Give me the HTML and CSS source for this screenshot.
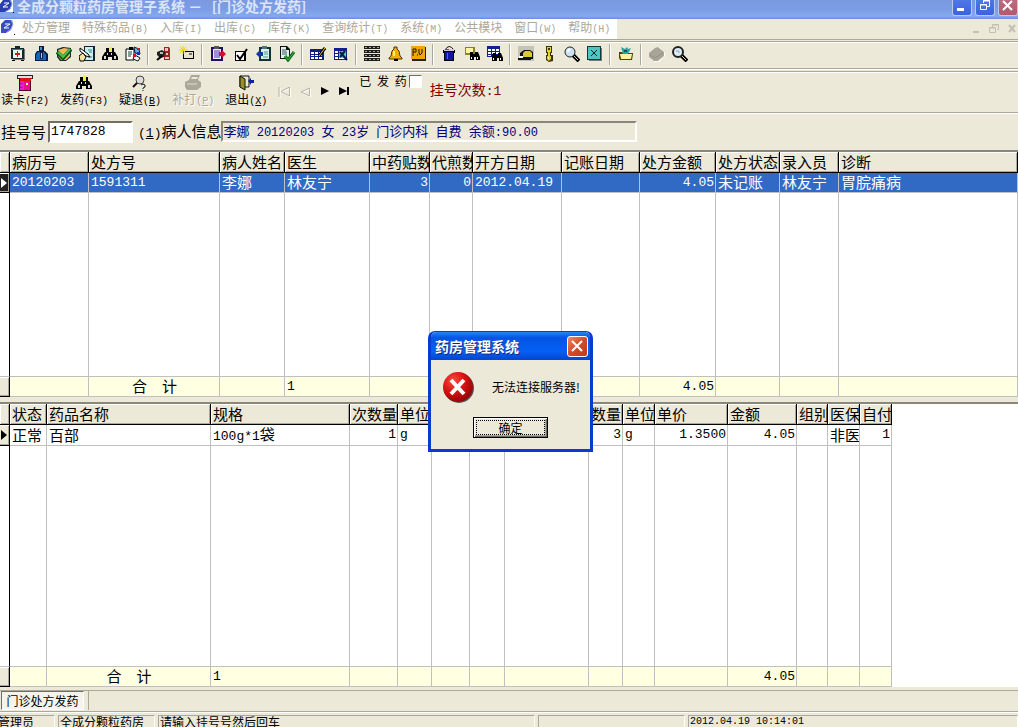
FILE: index.html
```html
<!DOCTYPE html>
<html lang="zh-Hans">
<head>
    <meta charset="UTF-8">
    <meta name="viewport" content="width=device-width, initial-scale=1.0">
    <title>全成分颗粒药房管理子系统</title>
    <link rel="stylesheet" href="styles.css">
</head>
<body>
    <header class="titlebar">
        <svg class="app-icon" width="14" height="13" viewBox="0 0 14 13"><rect width="13" height="12" fill="#fff"/><path d="M0 4l3-4h8l1 4-2 5-5 3H0z" fill="#2a3fb0"/><path d="M4 3h5L3 7h5" fill="none" stroke="#fff"/><path d="M10 0l2 4-2 5-5 3" fill="none" stroke="#8d9be0"/><path d="M13 12h1v1h-1z"/></svg>
        <h1>全成分颗粒药房管理子系统 － &nbsp; [门诊处方发药]</h1>
        <div class="win-controls">
            <button class="win" aria-label="最小化"><svg width="18" height="15" viewBox="0 0 18 15"><path d="M4 8h7v3H4z" fill="#fff"/></svg></button>
            <button class="win" aria-label="还原"><svg width="18" height="15" viewBox="0 0 18 15" fill="none" stroke="#fff"><path d="M7.500 3V.5h6v6H11M7 1h7"/><path d="M4.500 4.500h6v5h-6zM4 5h7"/></svg></button>
            <button class="win win-close" aria-label="关闭"><svg width="18" height="15" viewBox="0 0 18 15"><path d="M4 1l9 9M13 1l-9 9" stroke="#fff" stroke-width="2"/></svg></button>
        </div>
    </header>

    <nav class="menubar">
        <div class="menus">
            <svg class="app-icon" width="15" height="16" viewBox="0 0 15 16"><path d="M1 5l4-4h7l1 4-2 6-5 3H1z" fill="#3a4cc0"/><path d="M5 5h5L4 9h5" fill="none" stroke="#fff"/><path d="M11 1l2 4-2 5-5 4" fill="none" stroke="#a0a8e8"/><path d="M14 15h1v1h-1z"/></svg>
            <button>处方管理</button>
            <button>特殊药品<span class="n">(B)</span></button>
            <button>入库<span class="n">(I)</span></button>
            <button>出库<span class="n">(C)</span></button>
            <button>库存<span class="n">(K)</span></button>
            <button>查询统计<span class="n">(T)</span></button>
            <button>系统<span class="n">(M)</span></button>
            <button>公共模块</button>
            <button>窗口<span class="n">(W)</span></button>
            <button>帮助<span class="n">(H)</span></button>
        </div>
        <div class="mdi-controls">
            <button aria-label="最小化子窗口"><svg width="12" height="12" viewBox="0 0 12 12"><path d="M3 8h6v2H3z" fill="#c3c0b2"/></svg></button>
            <button aria-label="还原子窗口"><svg width="12" height="12" viewBox="0 0 12 12" fill="none" stroke="#c3c0b2"><path d="M4.500 4V1.500h6v5H9M4 2h7M1.500 4.500h6v5h-6zM1 5h7"/></svg></button>
            <button aria-label="关闭子窗口"><svg width="12" height="12" viewBox="0 0 12 12"><path d="M3 2l6 7M9 2l-6 7" stroke="#c3c0b2" stroke-width="2"/></svg></button>
        </div>
    </nav>

    <div class="toolbar">
        <button aria-label="药箱"><svg viewBox="0 0 16 16"><path d="M3 3h12v11H3z" fill="#777"/><path d="M5 0h5v2H5zM1 2h13v11H1z" fill="#0f2a2a"/><path d="M3 4h9v8H3z" fill="#e8f5f0"/><path d="M2 3h11v1H2z" fill="#2a8a80"/><path d="M5 7h5v2H5zM7 5h1v6H7z" fill="#e01010"/><path d="M2 14h3v1H2zM11 14h3v1h-3z"/></svg></button>
        <button aria-label="药瓶"><svg viewBox="0 0 16 16"><path d="M6 0h5v5H6z" fill="#001a4d"/><path d="M7 1h2v3H7z" fill="#39c"/><path d="M4 5h8l3 3v7H2V8z" fill="#001a4d"/><path d="M5 6h6l2 3v5H3V9z" fill="#1464b8"/><path d="M7 6h3v7H7z" fill="#0a2050"/><path d="M8 7h1v5H8z" fill="#9cf"/></svg></button>
        <button aria-label="审核"><svg viewBox="0 0 16 16"><path d="M1 3l6-2 8 1v9l-5 4H4l-3-4z" fill="#123"/><path d="M2 4l6-2 6 1v7l-4 4H5l-3-4z" fill="#efb956"/><path d="M1 6l6 6 8-9" fill="none" stroke="#075a10" stroke-width="4"/><path d="M2 6l5 5 7-8" fill="none" stroke="#49c04d" stroke-width="2"/></svg></button>
        <button aria-label="开方"><svg viewBox="0 0 16 16"><path d="M5 0h11v15H5z" fill="#123"/><path d="M6 1h8v13H6z" fill="#c9f0ee"/><path d="M9 4h4M10 6h3M9 11h4" stroke="#388"/><path d="M1 2l8 6 2 3-4-1-6-5z" fill="#fff" stroke="#000"/><path d="M0 10l4-3 3 4-2 4H1z" fill="#f5e5a0" stroke="#000"/></svg></button>
        <button aria-label="查找"><svg viewBox="0 0 16 16"><path d="M4 2h3v4H4zM10 2h2v4h-2z"/><path d="M7 1h3v6H7z" fill="#ee4"/><path d="M3 6h10l3 5v3h-6v-3H6v3H0v-3z"/><path d="M2 10h2v3H2zM12 10h2v3h-2zM5 7h1v2H5zM9 7h1v2H9z" fill="#ddd"/></svg></button>
        <button aria-label="处方列表"><svg viewBox="0 0 16 16"><path d="M1 3h8v11H1z" fill="#fff" stroke="#000"/><path d="M3 6h4M3 8h4M3 10h3" stroke="#333"/><path d="M4 1h4v3H4z"/><path d="M9 1l5 2 1 5-5-1z" fill="#7ad" stroke="#024"/><path d="M10 9l5 3-2 3-5-2z" fill="#fff" stroke="#111"/><path d="M8 8h3v3H8zM12 2h3v2h-3z" fill="#d11"/><path d="M12 6h3v3h-3z" fill="#13b"/></svg></button>
        <span class="sep"></span>
        <button aria-label="毒麻药品"><svg viewBox="0 0 16 16"><path d="M8 1h5l1 2v11H8z" fill="#922"/><path d="M9 2h3v3H9zM10 7h2v2h-2zM9 11h4v2H9z" fill="#f3c3c0"/><path d="M1 6l5-2 3 2-1 5-4 1-3-3z" fill="#222"/><path d="M4 6h3v2H4z" fill="#bbb"/><path d="M1 14l5-4" stroke="#000" stroke-width="2"/></svg></button>
        <button aria-label="新建"><svg viewBox="0 0 16 16"><path d="M4 5h11v8H4z"/><path d="M5 6h9v6H5z" fill="#e8e4d0"/><path d="M10 7h3v2h-3z" fill="#777"/><path d="M1 1l6 6M7 1L1 7M0 4h9M4 0v8" stroke="#e6d800"/></svg></button>
        <span class="sep"></span>
        <button aria-label="出库登记"><svg viewBox="0 0 16 16"><path d="M1 1h12v14H1z" fill="#201060"/><path d="M3 3h8v10H3z" fill="#eee8ff"/><path d="M4 0h5v3H4z" fill="#555"/><path d="M4 5h6M4 7h5M4 9h5M4 11h6" stroke="#5030c0"/><path d="M9 6h3V4l4 4-4 4v-2H9z" fill="#d81030"/></svg></button>
        <button aria-label="核对"><svg viewBox="0 0 16 16"><path d="M2 5h11v10H2z"/><path d="M3 6h8v8H3z" fill="#fff"/><path d="M4 9l3 4 7-10" fill="none" stroke="#000" stroke-width="2"/></svg></button>
        <button aria-label="入库登记"><svg viewBox="0 0 16 16"><path d="M3 1h12v14H3z" fill="#113535"/><path d="M5 3h8v10H5z" fill="#d8f2e8"/><path d="M6 0h5v3H6z" fill="#477"/><path d="M8 6h4M8 8h4M7 11h5" stroke="#599"/><path d="M7 6H4V4L0 8l4 4v-2h3z" fill="#1238a8"/></svg></button>
        <button aria-label="确认单据"><svg viewBox="0 0 16 16"><path d="M1 0h7l3 3v10H1z" fill="#111"/><path d="M2 1h5v3h3v8H2z" fill="#e0f0ec"/><path d="M3 4h4M3 6h5M3 8h5" stroke="#456"/><path d="M6 10l3 4 6-8" fill="none" stroke="#0a6a18" stroke-width="3"/><path d="M6 10l3 4 6-8" fill="none" stroke="#43b64d"/></svg></button>
        <span class="sep"></span>
        <button aria-label="编辑表格"><svg viewBox="0 0 16 16"><path d="M0 3h14v11H0z" fill="#102080"/><path d="M1 6h3v2H1zM5 6h3v2H5zM9 6h3v2H9zM1 9h3v1H1zM5 9h3v1H5zM9 9h3v1H9zM1 11h3v2H1zM5 11h3v2H5zM9 11h3v2H9z" fill="#fff"/><path d="M9 10l6-8" stroke="#000" stroke-width="3"/><path d="M9 10l6-8" stroke="#f0d020"/></svg></button>
        <button aria-label="查询表格"><svg viewBox="0 0 16 16"><path d="M1 2h13v12H1z" fill="#102080"/><path d="M2 5h3v2H2zM2 8h3v2H2zM2 11h3v2H2zM6 5h7v8H6z" fill="#fff"/><path d="M6 5h7v7H6z" fill="#5cc"/><path d="M7 6l7 8M12 5l-5 6" stroke="#001a50" stroke-width="2"/></svg></button>
        <span class="sep"></span>
        <button aria-label="药柜"><svg viewBox="0 0 16 16"><path d="M0 0h4v3H0zM4 0h4v3H4zM8 0h4v3H8zM12 0h4v3h-4zM0 4h16v3H0zM0 8h16v3H0zM0 12h16v3H0z" fill="#1c1c1c"/><path d="M1 1h2v1H1zM5 1h2v1H5zM9 1h2v1H9zM13 1h2v1h-2zM1 5h2v1H1zM5 5h2v1H5zM9 5h2v1H9zM13 5h2v1h-2zM1 9h2v1H1zM5 9h2v1H5zM9 9h2v1H9zM13 9h2v1h-2zM1 13h2v1H1zM5 13h2v1H5zM9 13h2v1H9zM13 13h2v1h-2z" fill="#aaa"/></svg></button>
        <button aria-label="提醒"><svg viewBox="0 0 16 16"><path d="M7 1h3v2l2 2 1 5 2 2v1H2v-1l2-2 1-5 2-2z" fill="#f0b000" stroke="#503000"/><path d="M7 5v5" stroke="#fff080" stroke-width="2"/><path d="M7 13h4v2H7z"/></svg></button>
        <button aria-label="零售价"><svg viewBox="0 0 16 16"><path d="M2 1h14v14H2z" fill="#222"/><path d="M1 0h14v13H1z" fill="#f0a800"/><path d="M3 10V3h3v3H3M7 9h1M9 3v4l1 2 2-2V3" fill="none" stroke="#201000"/></svg></button>
        <span class="sep"></span>
        <button aria-label="废弃"><svg viewBox="0 0 16 16"><path d="M2 4h12v3h-1v8H3V7H2z"/><path d="M4 6h8v8H4z" fill="#10189a"/><path d="M4 4q4-7 9 0" fill="none" stroke="#111"/><path d="M3 3h10v2H3z" fill="#ccc"/><path d="M4 3h4v1H4z" fill="#d22"/><path d="M6 7h1v6H6z" fill="#4a60e8"/></svg></button>
        <button aria-label="查找单据"><svg viewBox="0 0 16 16"><path d="M1 1h10v8H1z" fill="#8a8420"/><path d="M2 2h7v5H2z" fill="#fff6a0"/><path d="M6 6h3v2h2V6h3l2 5v3h-4v-3h-2v3H6v-4z"/><path d="M7 11h1v2H7zM13 11h1v2h-1z" fill="#fff"/></svg></button>
        <button aria-label="查找表格"><svg viewBox="0 0 16 16"><path d="M0 0h13v11H0z" fill="#102090"/><path d="M1 3h3v2H1zM5 3h3v2H5zM9 3h3v2H9zM1 6h3v2H1zM5 6h3v2H5zM9 6h3v2H9zM1 9h3v1H1z" fill="#fff"/><path d="M6 7h3v2h2V7h3l2 5v3h-4v-3h-2v3H5v-4z"/><path d="M6 12h1v2H6zM13 12h1v2h-1z" fill="#fff"/></svg></button>
        <span class="sep"></span>
        <button aria-label="交接"><svg viewBox="0 0 16 16"><path d="M0 0h16v15H0z" fill="#c6c3b8"/><path d="M2 7l4-3h6l3 2v7H2z" fill="#111"/><path d="M5 7l2-2h5l2 2v4H5z" fill="#d8cc30"/><path d="M0 12h13v2H0z" fill="#111"/><path d="M1 10h4v2H1z" fill="#fff"/></svg></button>
        <button aria-label="密码"><svg viewBox="0 0 16 16"><path d="M5 0h6v7h-1v2h2v6l-4 1-3-2V9h1V7H5z" fill="#3a3400"/><path d="M6 1h4v5H6zM7 6h2v4H7zM6 10h4v3l-2 2-2-2z" fill="#e6d020"/><path d="M7 2h2v2H7z" fill="#3a3400"/><path d="M7 11h1v2H7z" fill="#fff8a0"/></svg></button>
        <button aria-label="搜索"><svg viewBox="0 0 16 16"><path d="M9 9l6 6" stroke="#000" stroke-width="4"/><path d="M10 10l4 4" stroke="#dda"/><circle cx="6" cy="6" r="5" fill="#c8e4f4" stroke="#222"/><path d="M4 6q0-2 2-3" fill="none" stroke="#fff" stroke-width="2"/></svg></button>
        <button aria-label="关闭窗口"><svg viewBox="0 0 16 16"><path d="M2 2h13v13H2z" fill="#777"/><path d="M0 0h14v14H0z" fill="#0a3a3a"/><path d="M1 1h12v12H1z" fill="#50c4c0"/><path d="M4 4l6 6M10 4l-6 6" stroke="#023"/></svg></button>
        <span class="sep"></span>
        <button aria-label="归档"><svg viewBox="0 0 16 16"><path d="M1 6h3l1 1h10v1l-1 6H2L1 12z" fill="#4a4400"/><path d="M2 8h12l-1 5H3z" fill="#fff3a0"/><path d="M3 1l4 2 2-2 1 2 3-1-3 6H5z" fill="#20a8a8"/><path d="M6 4h3v2H6z" fill="#0a5a60"/></svg></button>
        <span class="sep"></span>
        <button aria-label="打印" disabled><svg viewBox="0 0 16 16"><path d="M1 8l6-6 3-1 6 6v3l-6 6H6l-5-4z" fill="#fff"/><path d="M0 7l6-5 3-1 6 5v4l-6 5H5l-5-4z" fill="#a9a596"/><path d="M1 9l5 3 8-5" fill="none" stroke="#96927f"/></svg></button>
        <button aria-label="预览"><svg viewBox="0 0 16 16"><path d="M9 9l6 6" stroke="#000" stroke-width="4"/><path d="M10 10l4 4" stroke="#dda"/><circle cx="6" cy="6" r="5" fill="#dcecf4" stroke="#222" stroke-width="2"/><path d="M4 5h3v2" fill="none" stroke="#8ab"/></svg></button>
    </div>

    <div class="actions">
        <button class="action"><svg width="18" height="16" viewBox="0 0 18 16"><path d="M1 0h16v4H1z" fill="#222"/><path d="M2 1h14v2H2z" fill="#ddd"/><path d="M3 4h12v12H3z" fill="#402"/><path d="M4 4h10v11H4z" fill="#e8108a"/><path d="M4 6h4v9H4z" fill="#e020d0"/><path d="M4 3h11v3H4z" fill="#e01010"/><path d="M10 8h2v2h-2z" fill="#ff8"/><path d="M4 8h2v1H4zM4 12h2v1H4z" fill="#24c"/></svg>读卡<span class="n">(F2)</span></button>
        <button class="action"><svg width="18" height="16" viewBox="0 0 16 16"><path d="M4 2h3v4H4zM10 2h2v4h-2z"/><path d="M7 1h3v6H7z" fill="#ee4"/><path d="M3 6h10l3 5v3h-6v-3H6v3H0v-3z"/><path d="M2 10h2v3H2zM12 10h2v3h-2zM5 7h1v2H5zM9 7h1v2H9z" fill="#ddd"/></svg>发药<span class="n">(F3)</span></button>
        <button class="action"><svg width="18" height="16" viewBox="0 0 18 16"><circle cx="9" cy="5" r="4" fill="#ddd" stroke="#444"/><path d="M6 8l-4 4" stroke="#111" stroke-width="2"/><path d="M10 10l2-1 2 1v2l-2 1v1M12 15v1" fill="none" stroke="#111"/></svg>疑退<span class="n">(<u>B</u>)</span></button>
        <button class="action" disabled><svg width="18" height="16" viewBox="0 0 18 16"><path d="M5 5l2-5h9l-2 5 3 2v5l-4 3H3l-2-3V7z" fill="#aca899"/><path d="M7 4l1-2h6l-1 2z" fill="#ece9d8"/><path d="M3 9h10" stroke="#e3dfcc"/></svg>补打<span class="n">(<u>P</u>)</span></button>
        <button class="action"><svg width="18" height="16" viewBox="0 0 18 16"><path d="M3 1h9v11H3z" fill="none" stroke="#111"/><path d="M3 1l5 3v11l-5-3z" fill="#9a9020" stroke="#111"/><path d="M11 6l3-3v2h3v3h-3v2z" fill="#1020a0"/></svg>退出<span class="n">(<u>X</u>)</span></button>
        <div class="record-nav">
            <button aria-label="第一条" disabled><svg width="14" height="12" viewBox="0 0 14 12" fill="none" stroke="#b8b5a6"><path d="M2 2v10M12.500 2v9L4 6z" stroke="#fff"/><path d="M1 1v10M11.500 1v9L3 5.500z"/></svg></button>
            <button aria-label="上一条" disabled><svg width="14" height="12" viewBox="0 0 14 12" fill="none" stroke="#b8b5a6"><path d="M12.500 3v8L4 7z" stroke="#fff"/><path d="M11.500 2v8L3 6z"/></svg></button>
            <button aria-label="下一条"><svg width="14" height="12" viewBox="0 0 14 12"><path d="M3 1l8 4-8 4z"/></svg></button>
            <button aria-label="最后一条"><svg width="14" height="12" viewBox="0 0 14 12"><path d="M1 1l8 4-8 4zM9 1h2v8H9z"/></svg></button>
        </div>
        <label class="dispensed" for="dispensed">已 发 药<input type="checkbox" id="dispensed"></label>
        <p class="visits">挂号次数<span class="n">:1</span></p>
    </div>

    <div class="patient">
        <label for="regNo">挂号号</label>
        <input type="text" id="regNo" value="1747828">
        <label for="info"><span class="n">(<u>1</u>)</span>病人信息</label>
        <output class="info" id="info">李娜<span class="n"> 20120203 </span>女<span class="n"> 23</span>岁<span class="n"> </span>门诊内科<span class="n"> </span>自费<span class="n"> </span>余额<span class="n">:90.00</span></output>
    </div>

    <main class="grids">
        <section class="grid grid-rx">
            <table>
                <colgroup>
                    <col class="w10"><col class="w79"><col class="w131"><col class="w65"><col class="w85"><col class="w60"><col class="w43"><col class="w89"><col class="w78"><col class="w76"><col class="w64"><col class="w59"><col>
                </colgroup>
                <thead>
                    <tr><th></th><th>病历号</th><th>处方号</th><th>病人姓名</th><th>医生</th><th>中药贴数</th><th>代煎数</th><th>开方日期</th><th>记账日期</th><th>处方金额</th><th>处方状态</th><th>录入员</th><th>诊断</th></tr>
                </thead>
                <tbody>
                    <tr class="row selected"><td class="mark"><svg width="8" height="12" viewBox="0 0 8 12"><path d="M1 1l6 5-6 5z" fill="#fff"/></svg></td><td class="n">20120203</td><td class="n">1591311</td><td>李娜</td><td>林友宁</td><td class="n r">3</td><td class="n r">0</td><td class="n">2012.04.19</td><td></td><td class="n r">4.05</td><td>未记账</td><td>林友宁</td><td>胃脘痛病</td></tr>
                    <tr class="blank"><td></td><td></td><td></td><td></td><td></td><td></td><td></td><td></td><td></td><td></td><td></td><td></td><td></td></tr>
                </tbody>
                <tfoot>
                    <tr><td class="mark"></td><td></td><td class="c">合　计</td><td></td><td class="n">1</td><td></td><td></td><td></td><td></td><td class="n r">4.05</td><td></td><td></td><td></td></tr>
                </tfoot>
            </table>
        </section>

        <section class="grid grid-drug">
            <table>
                <colgroup>
                    <col class="w10"><col class="w37"><col class="w164"><col class="w139"><col class="w48"><col class="w34"><col class="w38"><col class="w35"><col class="w84"><col class="w34"><col class="w32"><col class="w73"><col class="w69"><col class="w31"><col class="w32"><col class="w32">
                </colgroup>
                <thead>
                    <tr><th></th><th>状态</th><th>药品名称</th><th>规格</th><th>次数量</th><th>单位</th><th></th><th></th><th></th><th>数量</th><th>单位</th><th>单价</th><th>金额</th><th>组别</th><th>医保</th><th>自付</th></tr>
                </thead>
                <tbody>
                    <tr class="row"><td class="mark"><svg width="8" height="12" viewBox="0 0 8 12"><path d="M1 1l6 5-6 5z"/></svg></td><td>正常</td><td>百部</td><td><span class="n">100g*1</span>袋</td><td class="n r">1</td><td class="n">g</td><td></td><td></td><td></td><td class="n r">3</td><td class="n">g</td><td class="n r">1.3500</td><td class="n r">4.05</td><td></td><td>非医</td><td class="n r">1</td></tr>
                    <tr class="blank"><td></td><td></td><td></td><td></td><td></td><td></td><td></td><td></td><td></td><td></td><td></td><td></td><td></td><td></td><td></td><td></td></tr>
                </tbody>
                <tfoot>
                    <tr><td class="mark"></td><td></td><td class="c">合　计</td><td class="n">1</td><td></td><td></td><td></td><td></td><td></td><td></td><td></td><td></td><td class="n r">4.05</td><td></td><td></td><td></td></tr>
                </tfoot>
            </table>
        </section>
    </main>

    <div class="tabs">
        <button class="tab">门诊处方发药</button>
    </div>

    <footer class="statusbar">
        <span class="s-user">管理员</span>
        <span class="s-dept">全成分颗粒药房</span>
        <span class="s-hint">请输入挂号号然后回车</span>
        <span class="s-empty"></span>
        <span class="s-time n">2012.04.19 10:14:01</span>
    </footer>

    <div class="dialog" role="alertdialog" aria-labelledby="dlgTitle" aria-describedby="dlgText">
        <div class="dialog-title">
            <h2 id="dlgTitle">药房管理系统</h2>
            <button class="dialog-close" aria-label="关闭"><svg width="19" height="19" viewBox="0 0 19 19"><path d="M4 4l10 10M14 4L4 14" stroke="#fff" stroke-width="2"/></svg></button>
        </div>
        <div class="dialog-body">
            <div class="message">
                <svg width="34" height="34" viewBox="0 0 34 34">
                    <defs><radialGradient id="red" cx="35%" cy="30%" r="75%"><stop offset="0" stop-color="#f4503f"/><stop offset="0.5" stop-color="#d91212"/><stop offset="1" stop-color="#8c0505"/></radialGradient></defs>
                    <circle cx="17" cy="17" r="15" fill="#555"/>
                    <circle cx="16" cy="16" r="15" fill="url(#red)"/>
                    <path d="M9 9l13 14M22 9L9 23" stroke="#fff" stroke-width="4"/>
                </svg>
                <p id="dlgText">无法连接服务器!</p>
            </div>
            <button class="ok">确定</button>
        </div>
    </div>
</body>
</html>
```
FILE: styles.css
```css
* {
    box-sizing: border-box;
}
body {
    display: flex;
    flex-direction: column;
    position: relative;
    height: 100vh;
    margin: 0;
    overflow: hidden;
    background-color: #ece9d8;
    color: #000;
    font-family: "Noto Sans CJK SC", sans-serif;
    font-size: 12px;
    line-height: 16px;
    white-space: nowrap;
}
h1, h2, p {
    margin: 0;
    font-size: inherit;
}
button {
    margin: 0;
    padding: 0;
    border: none;
    background: none;
    color: inherit;
    font: inherit;
}
svg {
    display: block;
    flex: none;
}
/* half-width characters */
.n {
    font-family: "Liberation Mono", monospace;
    font-size: 10px;
    line-height: 12px;
    white-space: pre;
}

/* title bar */
.titlebar {
    display: flex;
    flex: none;
    height: 19px;
    background: linear-gradient(#7a98e0, #7c9de6 50%, #84aaee 85%, #6f8bdc);
    color: #dbe5f9;
}
.titlebar h1 {
    flex: 1;
    margin-left: 3px;
    font-size: 14px;
    font-weight: 700;
    line-height: 12px;
}
.win-controls {
    display: flex;
    gap: 3px;
}
.win {
    width: 20px;
    height: 16px;
    border: 1px solid #b9c8f2;
    border-top: none;
    border-radius: 0 0 3px 3px;
    background: linear-gradient(#5077e6, #3a63de);
}
.win-close {
    background: linear-gradient(#bd6a80, #b4586c);
}

/* menu */
.menubar {
    display: flex;
    flex: none;
    justify-content: space-between;
    height: 20px;
    color: #aca899;
}
.menus {
    display: flex;
    gap: 12px;
    align-items: flex-start;
    padding-right: 7px;
    background-color: #fff;
}
.menus .app-icon {
    margin-right: -5px;
}
.mdi-controls {
    display: flex;
    gap: 6px;
    align-items: center;
}

/* icon toolbar */
.toolbar {
    display: flex;
    flex: none;
    align-items: center;
    height: 30px;
    padding: 0 0 2px 6px;
    border-top: 3px double #aca899;
    border-bottom: 1px solid #aca899;
    box-shadow: inset 0 1px #fff, 0 1px #fff;
}
.toolbar button {
    display: flex;
    justify-content: center;
    width: 23px;
}
.toolbar svg {
    width: 16px;
    height: 16px;
}
.sep {
    width: 2px;
    height: 21px;
    margin: 0 3px;
    border-left: 1px solid #aca899;
    border-right: 1px solid #fff;
}

/* action buttons */
.actions {
    display: flex;
    flex: none;
    align-items: flex-start;
    height: 42px;
    margin-top: 2px;
    padding-left: 1px;
    border-top: 1px solid #aca899;
    border-bottom: 1px solid #aca899;
    box-shadow: inset 0 1px #fff, 0 1px #fff;
}
.action {
    margin-right: 11px;
    padding-top: 3px;
}
.action svg {
    margin: 0 auto;
}
.action:disabled {
    color: #aca899;
    text-shadow: 1px 1px #fff;
}
.record-nav {
    display: flex;
    gap: 6px;
    align-items: center;
    align-self: stretch;
    margin-right: 7px;
}
.dispensed {
    display: flex;
    gap: 2px;
    align-items: center;
    height: 18px;
    word-spacing: 3px;
}
.dispensed input {
    appearance: none;
    width: 13px;
    height: 13px;
    margin: 0;
    border: 1px solid;
    border-color: #716f64 #fff #fff #716f64;
    background-color: #fff;
}
.visits {
    margin-left: 8px;
    color: #800000;
    font-size: 14px;
    line-height: 34px;
}
.visits .n {
    font-size: 13px;
}

/* patient line */
.patient {
    display: flex;
    flex: none;
    align-items: center;
    height: 37px;
    padding-left: 1px;
    font-size: 15px;
}
.patient .n {
    font-size: 13px;
}
.patient input {
    width: 85px;
    height: 22px;
    margin: 0 5px 0 2px;
    padding: 0 0 0 1px;
    border: 2px solid;
    border-color: #716f64 #fff #fff #716f64;
    font-family: "Liberation Mono", monospace;
    font-size: 13px;
}
.patient .info {
    width: 416px;
    height: 21px;
    border: 2px solid;
    border-color: #8a877a #fff #fff #8a877a;
    color: #000080;
    font-size: 13px;
    line-height: 15px;
}
.info .n {
    font-size: 12px;
}

/* data grids */
.grids {
    display: flex;
    flex: 1;
    flex-direction: column;
    gap: 5px;
    min-height: 0;
}
.grid {
    min-height: 84px;
    border-top: 2px solid #8a877a;
    background-color: #fff;
}
.grid-rx {
    flex: 247 1 0;
}
.grid-drug {
    flex: 285 1 0;
}
table {
    table-layout: fixed;
    width: 892px;
    height: 100%;
    border-collapse: separate;
    border-spacing: 0;
    font-size: 15px;
    line-height: 17px;
}
.grid-rx table {
    width: 100%;
}
th, td {
    height: 20px;
    padding: 0 1px 2px 2px;
    overflow: hidden;
    border-right: 1px solid #c0c0c0;
    border-bottom: 1px solid #c0c0c0;
    font-weight: 400;
    text-align: left;
}
th {
    height: 21px;
    border-color: #000;
    background-color: #ece9d8;
    box-shadow: inset 1px 1px #fff, inset -1px -1px #aca899;
}
td.n {
    padding-bottom: 0;
    font-size: 13px;
}
td .n {
    font-size: 13px;
}
td.r {
    text-align: right;
}
td.c {
    text-align: center;
}
td:first-child {
    border-right-color: #000;
}
.blank td {
    height: auto;
}
td.mark {
    padding: 0;
    border-bottom-color: #000;
    background-color: #ece9d8;
    box-shadow: inset 0 1px #fff, inset -1px -1px #aca899;
}
.selected td {
    background-color: #316ac5;
    color: #fff;
}
.selected td.mark {
    background-color: #222;
}
tfoot td {
    background-color: #ffffe1;
}
.w10 { width: 10px; }
.w31 { width: 31px; }
.w32 { width: 32px; }
.w34 { width: 34px; }
.w35 { width: 35px; }
.w37 { width: 37px; }
.w38 { width: 38px; }
.w43 { width: 43px; }
.w48 { width: 48px; }
.w59 { width: 59px; }
.w60 { width: 60px; }
.w64 { width: 64px; }
.w65 { width: 65px; }
.w69 { width: 69px; }
.w73 { width: 73px; }
.w76 { width: 76px; }
.w78 { width: 78px; }
.w79 { width: 79px; }
.w84 { width: 84px; }
.w85 { width: 85px; }
.w89 { width: 89px; }
.w131 { width: 131px; }
.w139 { width: 139px; }
.w164 { width: 164px; }

/* window tabs */
.tabs {
    display: flex;
    flex: none;
    height: 22px;
    margin-top: 3px;
    padding-left: 1px;
    border-top: 1px solid #aca899;
    border-bottom: 1px solid #aca899;
}
.tab {
    width: 83px;
    height: 19px;
    margin-right: 4px;
    border: 1px solid;
    border-color: #716f64 #fff #fff #716f64;
    background-color: #f5f4ec;
    box-shadow: 4px 0 #ece9d8, 5px 0 #aca899;
}

/* status bar */
.statusbar {
    display: flex;
    flex: none;
    gap: 3px;
    height: 15px;
    margin-left: -4px;
    padding-top: 2px;
    overflow: hidden;
    border-top: 1px solid #fff;
}
.statusbar span {
    height: 20px;
    padding-left: 1px;
    border: 1px solid;
    border-color: #aca899 #fff #fff #aca899;
    line-height: 12px;
}
.s-user { width: 59px; }
.s-dept { width: 97px; }
.s-hint { width: 377px; }
.s-empty { width: 147px; }
.s-time { flex: 1; }

/* error message */
.dialog {
    position: absolute;
    left: 428px;
    top: 331px;
    width: 165px;
    border: 3px solid #0a3ad0;
    border-top-width: 1px;
    border-radius: 7px 7px 0 0;
    background-color: #ece9d8;
}
.dialog-title {
    display: flex;
    align-items: center;
    justify-content: space-between;
    height: 28px;
    padding: 0 2px 0 4px;
    border-radius: 5px 5px 0 0;
    background: linear-gradient(#2a84f8, #0554e4 20%, #0560f4 70%, #0345d0);
    color: #fff;
}
.dialog-title h2 {
    font-size: 14px;
    font-weight: 700;
    text-shadow: 1px 1px #0a2a80;
}
.dialog-close {
    width: 21px;
    height: 21px;
    border: 1px solid #fff;
    border-radius: 3px;
    background: linear-gradient(135deg, #ee8a6a, #d4492a 50%, #c03a1c);
}
.dialog-body {
    display: flex;
    flex-direction: column;
    gap: 12px;
    align-items: center;
    padding: 11px 8px;
}
.message {
    display: flex;
    gap: 16px;
    align-items: center;
    width: 100%;
    padding-left: 3px;
}
.message p {
    padding-bottom: 3px;
}
.ok {
    width: 75px;
    height: 21px;
    border: 1px solid #000;
    box-shadow: inset 1px 1px #fff, inset -1px -1px #716f64, inset -2px -2px #aca899;
    outline: 1px dotted #000;
    outline-offset: -4px;
    line-height: 16px;
}
```
